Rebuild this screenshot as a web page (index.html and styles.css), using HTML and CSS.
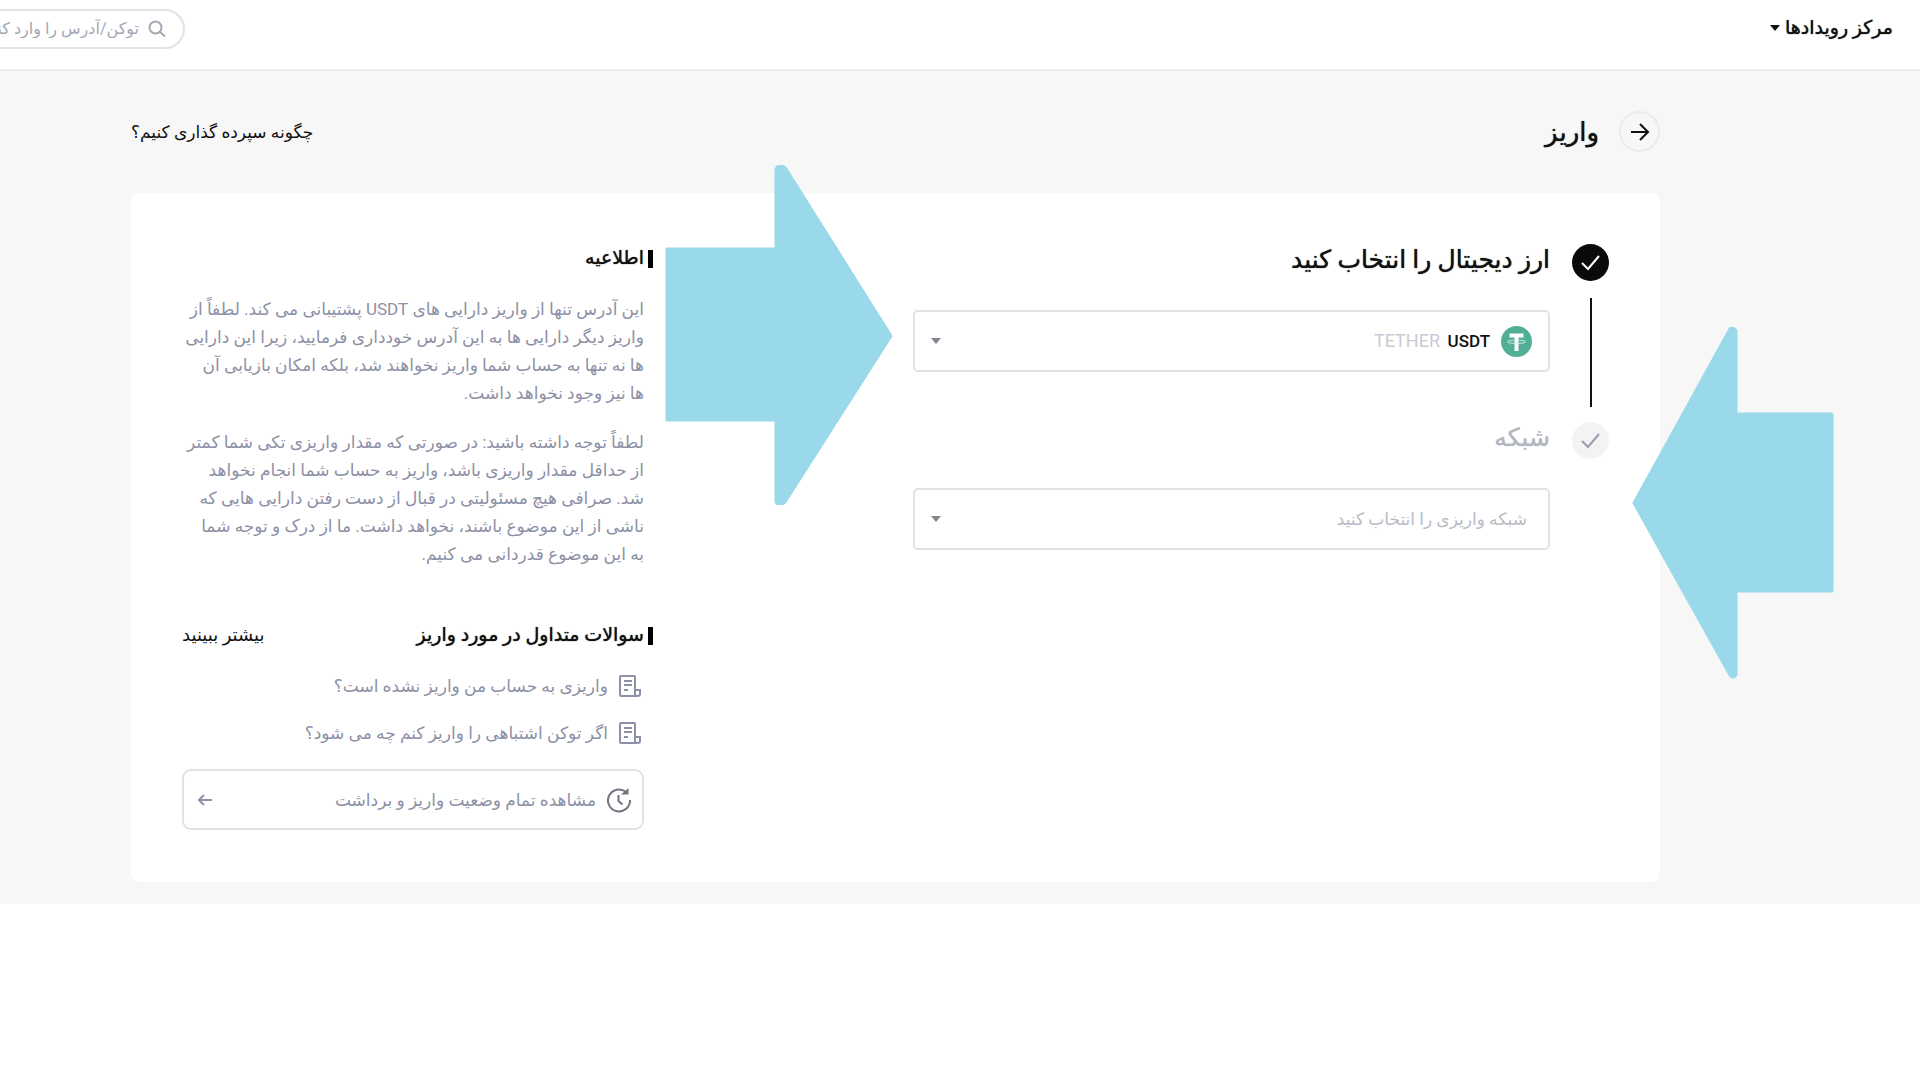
FILE: index.html
```html
<!DOCTYPE html>
<html lang="fa" dir="rtl">
<head>
  <meta charset="UTF-8" />
  <meta name="viewport" content="width=device-width, initial-scale=1.0"/>
  <title>واریز</title>
  <link rel="stylesheet" href="styles.css">
</head>
<body>
  <header class="topbar">
    <button class="events">مرکز رویدادها <span class="caret"></span></button>
    <label class="search">
      <svg width="18" height="18" viewBox="0 0 18 18"><circle cx="7.5" cy="7.5" r="6"/><path d="M12 12l5 4.500"/></svg>
      <input type="text" aria-label="جستجو" placeholder="توکن/آدرس را وارد کنید" />
    </label>
  </header>

  <main class="page">
    <div class="page-head">
      <button class="back" aria-label="بازگشت">
        <svg width="20" height="18" viewBox="0 0 20 18"><path d="M1 9h17M10 1l8 8-8 8"/></svg>
      </button>
      <h1>واریز</h1>
      <a class="help" href="#">چگونه سپرده گذاری کنیم؟</a>
    </div>

    <div class="card">
      <section class="steps">
        <div class="step">
          <div class="marker">
            <span class="dot done"><svg width="19" height="16" viewBox="0 0 19 16"><path d="M1 8l6 6L18 1"/></svg></span>
            <span class="line"></span>
          </div>
          <div class="field">
            <label class="step-title" for="coin">ارز دیجیتال را انتخاب کنید</label>
            <div class="select">
              <svg class="coin" width="31" height="31" viewBox="0 0 31 31">
                <circle cx="15.500" cy="15.500" r="15.500" fill="#50af95"/>
                <path d="M8.500 7.500h14v4h-5v13.500h-4V11.500h-5z" fill="#fff"/>
                <path d="M13 14.200c-9 .4-9 3.200 2.500 3.200s11.500-2.800 2.500-3.200" fill="none" stroke="#d5eee6" stroke-width="1"/>
              </svg>
              <select id="coin" class="coin-select">
                <option>USDT</option>
              </select>
              <span class="coin-name">TETHER</span>
              <span class="caret"></span>
            </div>
          </div>
        </div>

        <div class="step">
          <div class="marker">
            <span class="dot"><svg width="19" height="16" viewBox="0 0 19 16"><path d="M1 8l6 6L18 1"/></svg></span>
          </div>
          <div class="field">
            <label class="step-title muted" for="network">شبکه</label>
            <div class="select">
              <select id="network" class="network-select">
                <option>شبکه واریزی را انتخاب کنید</option>
              </select>
              <span class="caret"></span>
            </div>
          </div>
        </div>
      </section>

      <aside class="info">
        <h2>اطلاعیه</h2>
        <p>این آدرس تنها از واریز دارایی های USDT پشتیبانی می کند. لطفاً از<br>
          واریز دیگر دارایی ها به این آدرس خودداری فرمایید، زیرا این دارایی<br>
          ها نه تنها به حساب شما واریز نخواهند شد، بلکه امکان بازیابی آن<br>
          ها نیز وجود نخواهد داشت.</p>
        <p>لطفاً توجه داشته باشید: در صورتی که مقدار واریزی تکی شما کمتر<br>
          از حداقل مقدار واریزی باشد، واریز به حساب شما انجام نخواهد<br>
          شد. صرافی هیچ مسئولیتی در قبال از دست رفتن دارایی هایی که<br>
          ناشی از این موضوع باشند، نخواهد داشت. ما از درک و توجه شما<br>
          به این موضوع قدردانی می کنیم.</p>

        <div class="faq-head">
          <h2>سوالات متداول در مورد واریز</h2>
          <a href="#">بیشتر ببینید</a>
        </div>
        <ul class="faq">
          <li>
            <svg width="22" height="22" viewBox="0 0 22 22"><path d="M16 14V2q0-1-1-1H2Q1 1 1 2v18q0 1 1 1h17M16 15v4q0 2 2.500 2t2.500-2v-4zM5 6h8M5 10h8M5 15h4"/></svg>
            <a href="#">واریزی به حساب من واریز نشده است؟</a>
          </li>
          <li>
            <svg width="22" height="22" viewBox="0 0 22 22"><path d="M16 14V2q0-1-1-1H2Q1 1 1 2v18q0 1 1 1h17M16 15v4q0 2 2.500 2t2.500-2v-4zM5 6h8M5 10h8M5 15h4"/></svg>
            <a href="#">اگر توکن اشتباهی را واریز کنم چه می شود؟</a>
          </li>
        </ul>
        <a class="history" href="#">
          <svg class="clock" width="26" height="26" viewBox="0 0 26 26"><path d="M20 5A11 11 0 1 0 24 13M12.500 8v6l4 3.500"/><path class="tip" d="M15 7.500h7.500V1z"/></svg>
          <span>مشاهده تمام وضعیت واریز و برداشت</span>
          <svg class="go" width="14" height="12" viewBox="0 0 14 12"><path d="M14 6H1M6 1L1 6l5 5"/></svg>
        </a>
      </aside>

      <svg class="arrow arrow-coin" width="228" height="340" viewBox="0 0 228 340">
        <path d="M2 84h109V4q4-7 10 0L226 171 120 337q-5 5-9 0V255H2z"/>
      </svg>
      <svg class="arrow arrow-network" width="202" height="352" viewBox="0 0 202 352">
        <path d="M200 87h-96V4q-3-5-6-2L2 176l96 172q3 4 6 0v-84h96z"/>
      </svg>
    </div>
  </main>
</body>
</html>
```

FILE: styles.css
```css
* {
  box-sizing: border-box;
}
body {
  margin: 0;
  font-family: Roboto, "DejaVu Sans", sans-serif;
  font-size: 17px;
  line-height: 28px;
  color: #111;
  background: #fff;
  overflow-x: hidden;
}
button, input, select {
  font: inherit;
  color: inherit;
  background: none;
  border: none;
  padding: 0;
  margin: 0;
}
a {
  color: inherit;
  text-decoration: none;
}
h1, h2, p, ul {
  margin: 0;
  padding: 0;
}
svg {
  fill: none;
  stroke: currentColor;
  stroke-width: 2;
  flex: none;
}
.caret {
  display: inline-block;
  border: 5px solid transparent;
  border-top: 6px solid currentColor;
  border-bottom: 0;
}
/* medium weight for the headings, bold is too heavy */
h1, h2, .step-title, .events {
  font-weight: 500;
  text-shadow: 0 0 1px currentColor;
}

/* top bar */
.topbar {
  display: flex;
  justify-content: space-between;
  align-items: flex-start;
  height: 71px;
  padding: 9px 27px 0 0;
  border-bottom: 2px solid #ededee;
  overflow: hidden;
}
.events {
  display: flex;
  align-items: center;
  gap: 5px;
  height: 38px;
  font-size: 19px;
  cursor: pointer;
}
.search {
  display: flex;
  align-items: center;
  gap: 9px;
  width: 300px;
  height: 40px;
  margin-left: -115px;
  padding: 0 17px;
  border: 2px solid #e3e3e5;
  border-radius: 20px;
  font-size: 16px;
  color: #a5a7b4;
}
.search input {
  flex: 1;
  min-width: 0;
  outline: none;
}
.search input::placeholder {
  color: #a5a7b4;
}

/* page */
.page {
  padding: 40px 260px 22px 131px;
  background: #f7f7f8;
}
.page-head {
  display: flex;
  align-items: center;
  gap: 20px;
  margin-bottom: 41px;
}
.back {
  display: flex;
  align-items: center;
  justify-content: center;
  width: 41px;
  height: 41px;
  border: 2px solid #ebebed;
  border-radius: 50%;
  cursor: pointer;
}
h1 {
  font-size: 26px;
}
.help {
  margin-right: auto;
}
.card {
  position: relative;
  display: flex;
  justify-content: space-between;
  padding: 51px 51px 52px;
  background: #fff;
  border-radius: 8px;
}

/* steps */
.steps {
  flex: 0 1 696px;
}
.step {
  display: flex;
  gap: 22px;
}
.marker {
  display: flex;
  flex-direction: column;
  align-items: center;
}
.dot {
  display: flex;
  align-items: center;
  justify-content: center;
  width: 37px;
  height: 37px;
  border-radius: 50%;
  background: #f3f3f4;
  color: #9a9db0;
}
.dot.done {
  background: #0a0a0a;
  color: #fff;
}
.line {
  flex: 1;
  width: 2px;
  margin: 17px 0 15px;
  background: #111;
}
.field {
  flex: 1;
  padding-bottom: 50px;
}
.step-title {
  display: block;
  margin-bottom: 34px;
  font-size: 25px;
  line-height: 32px;
}
.step-title.muted {
  color: #b4b6c2;
}
.select {
  display: flex;
  align-items: center;
  height: 62px;
  padding: 0 16px;
  border: 2px solid #e2e2e4;
  border-radius: 5px;
}
.select .caret {
  margin-right: auto;
  color: #85868f;
}
.select select {
  appearance: none;
  outline: none;
  cursor: pointer;
}
.coin {
  stroke: none;
}
.coin-select {
  width: 46px;
  margin: 0 11px 0 4px;
  font-weight: 500;
}
.coin-name {
  font-size: 18px;
  color: #c9cad3;
}
.network-select {
  flex: 1;
  padding-right: 5px;
  color: #b9bbc5;
}

/* notice + faq */
.info {
  flex: 0 1 470px;
  padding-right: 8px;
  color: #8d90a6;
}
h2 {
  position: relative;
  font-size: 19px;
  color: #111;
}
h2::before {
  content: "";
  position: absolute;
  top: 6px;
  right: -9px;
  width: 5px;
  height: 18px;
  background: #000;
}
.info h2 {
  margin-bottom: 23px;
}
.info p {
  margin-bottom: 21px;
  white-space: nowrap;
}
.faq-head {
  display: flex;
  justify-content: space-between;
  margin-top: 53px;
  color: #111;
}
.faq-head a {
  font-size: 18px;
}
.faq {
  display: grid;
  gap: 19px;
  list-style: none;
}
.faq li {
  display: flex;
  align-items: center;
  gap: 11px;
  padding-right: 3px;
}
.history {
  display: flex;
  align-items: center;
  gap: 10px;
  height: 61px;
  margin-top: 22px;
  padding: 0 10px 0 14px;
  border: 2px solid #e2e2e4;
  border-radius: 9px;
}
.clock {
  color: #70727f;
}
.tip {
  fill: currentColor;
  stroke: none;
}
.go {
  margin-right: auto;
}

/* pointers over the card */
.arrow {
  position: absolute;
  fill: #99d9ea;
  stroke: #99d9ea;
  stroke-width: 3;
  stroke-linejoin: round;
}
.arrow-coin {
  top: -28px;
  left: 534px;
}
.arrow-network {
  top: 134px;
  right: -174px;
}
```
